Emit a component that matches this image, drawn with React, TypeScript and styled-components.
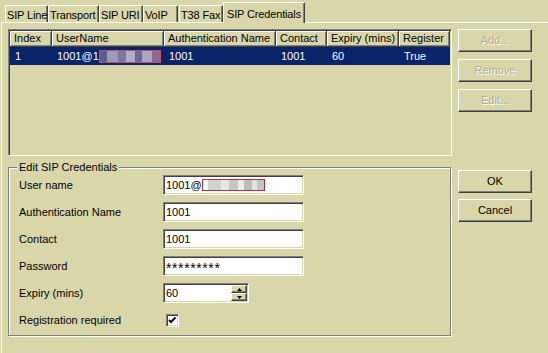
//#########
// Imports
//#########
import * as React from 'react';

import styled, { createGlobalStyle } from 'styled-components';

//#######
// Style
//#######
const FACE = '#D9D7A9';
const SHADOW = '#808080';
const DARK = '#404040';
const HILITE = '#ffffff';
const SELECTED = '#0A246A';
const COLUMNS = '42px 112px 112px 51px 72px 51px';

const GlobalStyle = createGlobalStyle`
  html, body {
    margin: 0;
    padding: 0;
    background: ${FACE};
  }
  body {
    font-family: "Liberation Sans", Arial, sans-serif;
    font-size: 11px;
    line-height: 13px;
    color: #000;
  }
`;

const StyledWindow = styled.div`
  width: 548px;
  height: 353px;
  overflow: hidden;
  background: ${FACE};
  display: flex;
  flex-direction: column;
`;

const StyledTabStrip = styled.div`
  height: 22px;
  padding-left: 5px;
  display: flex;
  align-items: flex-end;
  flex-shrink: 0;
`;

const StyledTab = styled.div<{ $width: number; $active?: boolean; $gap?: number }>`
  box-sizing: border-box;
  width: ${(props) => props.$width}px;
  height: ${(props) => (props.$active ? 21 : 17)}px;
  margin-left: ${(props) => props.$gap || 0}px;
  margin-bottom: ${(props) => (props.$active ? -1 : 0)}px;
  padding: ${(props) => (props.$active ? '5px 0 0 3px' : '3px 0 0 1px')};
  border-top: 1px solid ${HILITE};
  border-left: 1px solid ${HILITE};
  border-right: 1px solid ${DARK};
  box-shadow: inset -1px 0 0 ${SHADOW};
  border-radius: 2px 2px 0 0;
  background: ${FACE};
  white-space: nowrap;
  letter-spacing: -0.15px;
  position: relative;
  z-index: ${(props) => (props.$active ? 1 : 0)};
`;

const StyledPanel = styled.div`
  flex: 1;
  margin-left: 1px;
  border-top: 1px solid ${HILITE};
  border-left: 1px solid ${HILITE};
  padding: 6px 0 0 6px;
  display: flex;
  gap: 6px;
`;

const StyledLeftColumn = styled.div`
  width: 444px;
  display: flex;
  flex-direction: column;
`;

const StyledListView = styled.div`
  box-sizing: border-box;
  height: 127px;
  border: 1px solid;
  border-color: ${SHADOW} ${HILITE} ${HILITE} ${SHADOW};
  box-shadow: inset 1px 1px 0 ${DARK}, inset -1px -1px 0 ${FACE};
  padding: 1px;
`;

const StyledRow = styled.div<{ $selected?: boolean }>`
  display: grid;
  grid-template-columns: ${COLUMNS};
  height: ${(props) => (props.$selected ? 18 : 16)}px;
  background: ${(props) => (props.$selected ? SELECTED : FACE)};
  color: ${(props) => (props.$selected ? '#fff' : '#000')};
`;

const StyledHeaderCell = styled.div`
  box-sizing: border-box;
  display: flex;
  align-items: center;
  padding-left: 4px;
  border-right: 1px solid ${DARK};
  border-bottom: 1px solid ${DARK};
  box-shadow: inset 1px 1px 0 ${HILITE}, inset -1px -1px 0 ${SHADOW};
  white-space: nowrap;
  overflow: hidden;
`;

const StyledCell = styled.div`
  display: flex;
  align-items: center;
  padding-left: 5px;
  white-space: nowrap;
  overflow: hidden;
`;

const StyledBlur = styled.span<{ $onDark?: boolean }>`
  display: inline-block;
  box-sizing: border-box;
  width: ${(props) => (props.$onDark ? 62 : 63)}px;
  height: ${(props) => (props.$onDark ? 13 : 12)}px;
  border: 1px solid ${(props) => (props.$onDark ? '#C0506E' : '#A83040')};
  background: ${(props) =>
    props.$onDark
      ? 'linear-gradient(90deg, #5e5c8a 0 12%, #9e9aba 12% 30%, #7a789e 30% 44%, #b2acc8 44% 58%, #6c6a94 58% 70%, #a8a4c2 70% 86%, #8e6a90 86%)'
      : 'linear-gradient(90deg, #fff 0 8%, #d2d2d2 8% 30%, #e6e6e6 30% 42%, #c6c6c6 42% 58%, #ececec 58% 68%, #bcbcbc 68% 80%, #e2e2e2 80% 88%, #c4c4c4 88%)'};
`;

const StyledGroupBox = styled.fieldset`
  box-sizing: border-box;
  width: 443px;
  margin: 5px 0 0 0;
  padding: 1px 0 5px 10px;
  border: 1px solid ${SHADOW};
  box-shadow: inset 1px 1px 0 ${HILITE}, 1px 1px 0 ${HILITE};
  min-width: 0;
`;

const StyledLegend = styled.legend`
  padding: 0 2px;
  margin-left: -2px;
  background: ${FACE};
  line-height: 13px;
`;

const StyledFieldGrid = styled.div`
  display: grid;
  grid-template-columns: 144px auto;
  grid-auto-rows: 20px;
  row-gap: 7px;
  align-items: center;
`;

const StyledTextBox = styled.div<{ $width: number }>`
  box-sizing: border-box;
  width: ${(props) => props.$width}px;
  height: 20px;
  border: 1px solid;
  border-color: ${SHADOW} ${HILITE} ${HILITE} ${SHADOW};
  box-shadow: inset 1px 1px 0 ${DARK}, inset -1px -1px 0 ${FACE};
  background: #fff;
  padding: 1px 1px 1px 2px;
  display: flex;
  align-items: center;
  white-space: nowrap;
  overflow: hidden;
`;

const StyledMasked = styled.span`
  font-size: 14px;
  letter-spacing: 0.6px;
  line-height: 14px;
  padding-top: 3px;
`;

const StyledSpinText = styled.span`
  flex: 1;
`;

const StyledSpinButtons = styled.div`
  width: 16px;
  height: 16px;
  display: flex;
  flex-direction: column;
`;

const StyledSpinButton = styled.div`
  box-sizing: border-box;
  flex: 1;
  background: ${FACE};
  border: 1px solid;
  border-color: ${HILITE} ${DARK} ${DARK} ${HILITE};
  box-shadow: inset -1px -1px 0 ${SHADOW};
  display: flex;
  align-items: center;
  justify-content: center;
`;

const StyledCheckBox = styled.div`
  box-sizing: border-box;
  width: 13px;
  height: 13px;
  margin-left: 3px;
  border: 1px solid;
  border-color: ${SHADOW} ${HILITE} ${HILITE} ${SHADOW};
  box-shadow: inset 1px 1px 0 ${DARK}, inset -1px -1px 0 ${FACE};
  background: #fff;
  display: flex;
  align-items: center;
  justify-content: center;
`;

const StyledButtonColumn = styled.div`
  display: flex;
  flex-direction: column;
`;

const StyledButtonStack = styled.div<{ $gap: number; $offset?: number }>`
  display: flex;
  flex-direction: column;
  gap: ${(props) => props.$gap}px;
  margin-top: ${(props) => props.$offset || 0}px;
`;

const StyledButton = styled.button`
  box-sizing: border-box;
  width: 74px;
  height: 23px;
  padding: 0;
  font: inherit;
  color: #000;
  background: ${FACE};
  border: 1px solid;
  border-color: ${HILITE} ${DARK} ${DARK} ${HILITE};
  box-shadow: inset -1px -1px 0 ${SHADOW};
  &:disabled {
    color: #ADAB9A;
    text-shadow: 1px 1px 0 ${HILITE};
  }
`;

//#############################################################
// Constants, Variables & Functions defined outside components
//#############################################################
const TABS = [
  { label: 'SIP Line', width: 43 },
  { label: 'Transport', width: 51 },
  { label: 'SIP URI', width: 44 },
  { label: 'VoIP', width: 35 },
  { label: 'T38 Fax', width: 44, gap: 1 },
  { label: 'SIP Credentials', width: 82, active: true },
];

const HEADERS = ['Index', 'UserName', 'Authentication Name', 'Contact', 'Expiry (mins)', 'Register'];

const Arrow = ({ up }: { up?: boolean }) => (
  <svg width="5" height="3" viewBox="0 0 5 3">
    <path d={up ? 'M0 3 L2.5 0 L5 3 Z' : 'M0 0 L2.5 3 L5 0 Z'} fill="#000" />
  </svg>
);

const CheckMark = () => (
  <svg width="9" height="9" viewBox="0 0 9 9">
    <path d="M1 4 L3 6 L7.5 1.5" fill="none" stroke="#000" strokeWidth="2" />
  </svg>
);

//###############
// App component
//###############
const App = () => {
  return (
    <StyledWindow>
      <GlobalStyle />
      <StyledTabStrip>
        {TABS.map((tab) => (
          <StyledTab key={tab.label} $width={tab.width} $active={tab.active} $gap={tab.gap}>
            {tab.label}
          </StyledTab>
        ))}
      </StyledTabStrip>

      <StyledPanel>
        <StyledLeftColumn>
          <StyledListView>
            <StyledRow>
              {HEADERS.map((header) => (
                <StyledHeaderCell key={header}>{header}</StyledHeaderCell>
              ))}
            </StyledRow>
            <StyledRow $selected>
              <StyledCell>1</StyledCell>
              <StyledCell>
                1001@1<StyledBlur $onDark />
              </StyledCell>
              <StyledCell>1001</StyledCell>
              <StyledCell>1001</StyledCell>
              <StyledCell>60</StyledCell>
              <StyledCell>True</StyledCell>
            </StyledRow>
          </StyledListView>

          <StyledGroupBox>
            <StyledLegend>Edit SIP Credentials</StyledLegend>
            <StyledFieldGrid>
              <span>User name</span>
              <StyledTextBox $width={141}>
                1001@<StyledBlur />
              </StyledTextBox>

              <span>Authentication Name</span>
              <StyledTextBox $width={141}>1001</StyledTextBox>

              <span>Contact</span>
              <StyledTextBox $width={141}>1001</StyledTextBox>

              <span>Password</span>
              <StyledTextBox $width={141}>
                <StyledMasked>*********</StyledMasked>
              </StyledTextBox>

              <span>Expiry (mins)</span>
              <StyledTextBox $width={86}>
                <StyledSpinText>60</StyledSpinText>
                <StyledSpinButtons>
                  <StyledSpinButton><Arrow up /></StyledSpinButton>
                  <StyledSpinButton><Arrow /></StyledSpinButton>
                </StyledSpinButtons>
              </StyledTextBox>

              <span>Registration required</span>
              <StyledCheckBox>
                <CheckMark />
              </StyledCheckBox>
            </StyledFieldGrid>
          </StyledGroupBox>
        </StyledLeftColumn>

        <StyledButtonColumn>
          <StyledButtonStack $gap={7}>
            <StyledButton disabled>Add...</StyledButton>
            <StyledButton disabled>Remove</StyledButton>
            <StyledButton disabled>Edit...</StyledButton>
          </StyledButtonStack>
          <StyledButtonStack $gap={6} $offset={58}>
            <StyledButton>OK</StyledButton>
            <StyledButton>Cancel</StyledButton>
          </StyledButtonStack>
        </StyledButtonColumn>
      </StyledPanel>
    </StyledWindow>
  );
};

export default App;
